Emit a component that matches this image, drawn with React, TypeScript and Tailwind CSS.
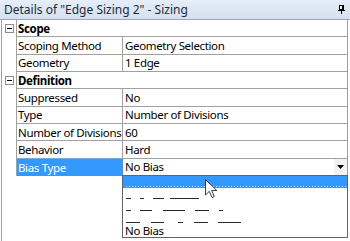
const GRID = "border-[#a0a0a0]";

type Row =
  | { kind: "cat"; label: string }
  | { kind: "prop"; name: string; value: string; selected?: boolean; combo?: boolean };

const rows: Row[] = [
  { kind: "cat", label: "Scope" },
  { kind: "prop", name: "Scoping Method", value: "Geometry Selection" },
  { kind: "prop", name: "Geometry", value: "1 Edge" },
  { kind: "cat", label: "Definition" },
  { kind: "prop", name: "Suppressed", value: "No" },
  { kind: "prop", name: "Type", value: "Number of Divisions" },
  { kind: "prop", name: "Number of Divisions", value: "60" },
  { kind: "prop", name: "Behavior", value: "Hard" },
  { kind: "prop", name: "Bias Type", value: "No Bias", selected: true, combo: true },
];

// dash segments for each bias option (x relative to the list's left edge)
const biasDashes: number[][][] = [
  [
    [3, 8],
    [17, 21],
    [30, 41],
    [47, 76],
  ],
  [
    [3, 8],
    [17, 29],
    [40, 62],
    [72, 86],
    [96, 100],
  ],
  [
    [3, 17],
    [28, 41],
    [55, 60],
    [71, 85],
    [95, 118],
  ],
];

function Minus() {
  return (
    <div className="w-[9px] h-[9px] border border-[#8c8c8c] bg-white flex items-center justify-center">
      <div className="w-[5px] h-[1px] bg-black" />
    </div>
  );
}

function Pin() {
  return (
    <svg width="7" height="9" viewBox="0 0 7 9" className="block">
      <rect x="1.5" y="0.5" width="4" height="4" fill="#fff" stroke="#000" />
      <rect x="4" y="1" width="1" height="3" fill="#000" />
      <rect x="0" y="5" width="7" height="1" fill="#000" />
      <rect x="3" y="6" width="1" height="3" fill="#000" />
    </svg>
  );
}

function Cursor() {
  return (
    <svg width="13" height="20" viewBox="0 0 13 20" className="absolute left-[205px] top-[179px]">
      <path
        d="M0.5 0.5 L0.5 16 L4.3 12.3 L7 18.5 L9.3 17.5 L6.7 11.5 L11.8 11.5 Z"
        fill="#fff"
        stroke="#3a3a3a"
        strokeWidth="1"
        strokeLinejoin="round"
      />
    </svg>
  );
}

function DashItem({ segs }: { segs: number[][] }) {
  return (
    <div className="h-[12px] relative">
      <svg width="224" height="12" className="block">
        {segs.map(([a, b], i) => (
          <rect key={i} x={a} y={10} width={b - a} height={1} fill="#2a2a2a" />
        ))}
      </svg>
    </div>
  );
}

export default function App() {
  return (
    <div
      className="relative w-[350px] h-[241px] bg-white overflow-hidden text-[12px] text-black whitespace-nowrap"
      style={{ fontFamily: '"Noto Sans", "Open Sans", sans-serif' }}
    >
      {/* title bar */}
      <div className="h-[20px] border-b border-[#9aa7b6] bg-gradient-to-b from-[#e5eef9] to-[#d4e1f1] flex items-center justify-between pl-[4px] pr-[5px]">
        <span className="text-[#1f2a36] leading-none">Details of "Edge Sizing 2" - Sizing</span>
        <Pin />
      </div>

      {/* property grid */}
      <div className={`ml-[1px] w-[347px] h-[221px] border-l ${GRID} text-[11.5px] tracking-[-0.35px]`}>
        {rows.map((r, i) =>
          r.kind === "cat" ? (
            <div key={i} className="flex h-[17.33px]">
              <div className={`w-[15px] border-r ${GRID} flex items-center justify-center`}>
                <Minus />
              </div>
              <div className={`flex-1 border-b border-r ${GRID} flex items-center pl-[1px] font-bold`}>
                {r.label}
              </div>
            </div>
          ) : (
            <div key={i} className="flex h-[17.33px]">
              <div className={`w-[15px] border-r ${GRID}`} />
              <div
                className={
                  r.selected
                    ? "w-[106px] bg-[#3399ff] text-white flex items-center pl-[1px] overflow-hidden"
                    : `w-[106px] border-b border-r ${GRID} flex items-center pl-[1px] overflow-hidden`
                }
              >
                {r.name}
              </div>
              <div className={`flex-1 border-b border-r ${GRID} flex items-center pl-[2px]`}>
                <span className="flex-1">{r.value}</span>
                {r.combo && (
                  <div className="w-[13px] h-full bg-[#f3f3f3] flex items-center justify-center">
                    <svg width="7" height="4" viewBox="0 0 7 4">
                      <path d="M0 0 H7 L3.5 4 Z" fill="#000" />
                    </svg>
                  </div>
                )}
              </div>
            </div>
          )
        )}
      </div>

      {/* open dropdown list */}
      <div className="absolute left-[122px] top-[175px] w-[226px] h-[63px] border border-[#646464] bg-white leading-none text-[11.5px] tracking-[-0.35px]">
        <div className="h-[12px] bg-[#3399ff] relative">
          <svg width="224" height="12" className="block">
            <line x1="3" y1="10.5" x2="224" y2="10.5" stroke="#d8e8ff" strokeDasharray="1 2" />
          </svg>
        </div>
        {biasDashes.map((segs, i) => (
          <DashItem key={i} segs={segs} />
        ))}
        <div className="h-[13px] flex items-center pl-[2px]">No Bias</div>
      </div>

      <Cursor />
    </div>
  );
}
